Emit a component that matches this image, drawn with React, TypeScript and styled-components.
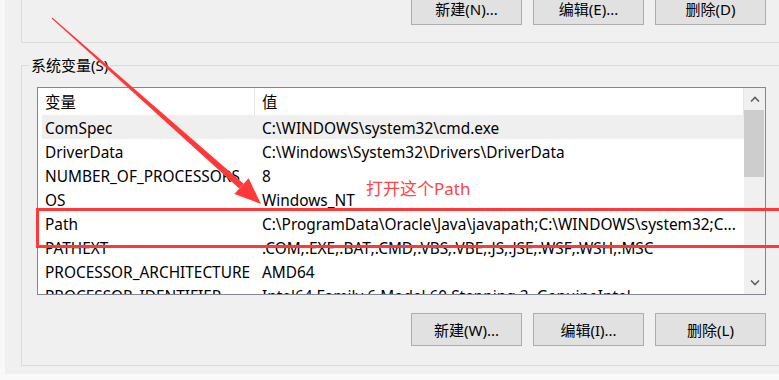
import { createGlobalStyle, styled } from "styled-components";

const GlobalStyle = createGlobalStyle`
    html, body {
        margin: 0;
        padding: 0;
        background: #f9f9f9;
    }
    * {
        box-sizing: border-box;
    }
`;

const FONT = `"Noto Sans", "Noto Sans CJK SC", sans-serif`;

const Screen = styled.div`
    position: relative;
    width: 779px;
    height: 380px;
    display: flex;
    overflow: hidden;
    font-family: ${FONT};
    font-size: 15px;
    color: #000;
`;

const BehindStrip = styled.div`
    width: 5px;
    flex-shrink: 0;
    background: #f9f9f9;
`;

const Dialog = styled.div`
    flex: 1;
    height: 374px;
    background: #f0f0f0;
    padding-left: 16px;
    display: flex;
    flex-direction: column;
    overflow: hidden;
`;

const GroupBox = styled.div<{ $top?: boolean }>`
    width: 780px;
    flex-shrink: 0;
    border: 1px solid #dcdcdc;
    display: flex;
    flex-direction: column;
    margin-top: ${(p) => (p.$top ? "-20px" : "22px")};
    padding: ${(p) => (p.$top ? "11px 0 17px 15px" : "0 0 19px 15px")};
`;

const Legend = styled.div`
    align-self: flex-start;
    margin: -11px 0 0 -8px;
    padding: 0 2px;
    height: 21px;
    line-height: 21px;
    background: #f0f0f0;
`;

const ButtonRow = styled.div`
    width: 729px;
    display: flex;
    justify-content: flex-end;
    gap: 11px;
`;

const Button = styled.button`
    width: 111px;
    height: 33px;
    background: #e1e1e1;
    border: 1px solid #adadad;
    font-family: ${FONT};
    font-size: 15px;
    color: #000;
    padding: 0;
`;

const ListBox = styled.div`
    width: 729px;
    height: 208px;
    margin: 11px 0 18px;
    border: 1px solid #828790;
    background: #fff;
    display: flex;
    overflow: hidden;
    font-size: 15.4px;
`;

const Table = styled.div`
    flex: 1;
    display: flex;
    flex-direction: column;
    overflow: hidden;
`;

const HeaderRow = styled.div`
    display: flex;
    height: 27px;
    flex-shrink: 0;
    border-right: 1px solid #e5e5e5;
`;

const HeaderCell = styled.div<{ $w?: number }>`
    ${(p) => (p.$w ? `width: ${p.$w}px; border-right: 1px solid #e5e5e5;` : "flex: 1;")}
    padding-left: 7px;
    line-height: 29px;
    white-space: nowrap;
    overflow: hidden;
`;

const Row = styled.div<{ $hover?: boolean }>`
    display: flex;
    height: 24px;
    flex-shrink: 0;
    margin-left: 4px;
    background: ${(p) => (p.$hover ? "#efefef" : "transparent")};
`;

const Cell = styled.div<{ $w?: number }>`
    ${(p) => (p.$w ? `width: ${p.$w}px;` : "flex: 1;")}
    padding-left: ${(p) => (p.$w ? "3px" : "7px")};
    height: 24px;
    line-height: 27px;
    white-space: nowrap;
    overflow: hidden;
`;

const ScrollBar = styled.div`
    width: 21px;
    flex-shrink: 0;
    background: #f0f0f0;
    display: flex;
    flex-direction: column;
`;

const ScrollButton = styled.div`
    height: 22px;
    display: flex;
    align-items: center;
    justify-content: center;
`;

const Thumb = styled.div`
    height: 67px;
    margin-right: 1px;
    background: #cdcdcd;
`;

const Track = styled.div`
    flex: 1;
`;

const Overlay = styled.div`
    position: absolute;
    inset: 0;
    pointer-events: none;
`;

const HighlightBox = styled.div`
    position: absolute;
    left: 36px;
    top: 208px;
    width: 780px;
    height: 40px;
    border: 3px solid #ff3838;
`;

const Note = styled.div`
    position: absolute;
    left: 366px;
    top: 175px;
    font-size: 17px;
    color: #f44;
    white-space: nowrap;
`;

const ArrowSvg = styled.svg`
    position: absolute;
    left: 0;
    top: 0;
`;

const Chevron = ({ up }: { up?: boolean }) => (
    <svg width="10" height="6" viewBox="0 0 10 6">
        <polyline
            points={up ? "1,5.5 5,1.5 9,5.5" : "1,0.5 5,4.5 9,0.5"}
            fill="none"
            stroke="#606060"
            strokeWidth="1.6"
        />
    </svg>
);

const rows = [
    ["ComSpec", "C:\\WINDOWS\\system32\\cmd.exe"],
    ["DriverData", "C:\\Windows\\System32\\Drivers\\DriverData"],
    ["NUMBER_OF_PROCESSORS", "8"],
    ["OS", "Windows_NT"],
    ["Path", "C:\\ProgramData\\Oracle\\Java\\javapath;C:\\WINDOWS\\system32;C..."],
    ["PATHEXT", ".COM;.EXE;.BAT;.CMD;.VBS;.VBE;.JS;.JSE;.WSF;.WSH;.MSC"],
    ["PROCESSOR_ARCHITECTURE", "AMD64"],
    ["PROCESSOR_IDENTIFIER", "Intel64 Family 6 Model 60 Stepping 3, GenuineIntel"],
];

export default function App() {
    return <>
        <GlobalStyle />
        <Screen>
            <BehindStrip />
            <Dialog>
                <GroupBox $top>
                    <ButtonRow>
                        <Button>新建(N)...</Button>
                        <Button>编辑(E)...</Button>
                        <Button>删除(D)</Button>
                    </ButtonRow>
                </GroupBox>
                <GroupBox>
                    <Legend>系统变量(S)</Legend>
                    <ListBox>
                        <Table>
                            <HeaderRow>
                                <HeaderCell $w={217}>变量</HeaderCell>
                                <HeaderCell>值</HeaderCell>
                            </HeaderRow>
                            {rows.map(([name, value], i) => (
                                <Row key={name} $hover={i === 0}>
                                    <Cell $w={213}>{name}</Cell>
                                    <Cell>{value}</Cell>
                                </Row>
                            ))}
                        </Table>
                        <ScrollBar>
                            <ScrollButton><Chevron up /></ScrollButton>
                            <Thumb />
                            <Track />
                            <ScrollButton><Chevron /></ScrollButton>
                        </ScrollBar>
                    </ListBox>
                    <ButtonRow>
                        <Button>新建(W)...</Button>
                        <Button>编辑(I)...</Button>
                        <Button>删除(L)</Button>
                    </ButtonRow>
                </GroupBox>
            </Dialog>
            <Overlay>
                <ArrowSvg width="779" height="380" viewBox="0 0 779 380">
                    <polygon
                        points="51.7,18.4 52.3,17.6 243.6,183.8 239.2,188.6"
                        fill="#ff3838"
                    />
                    <polygon
                        points="261,204 234.4,194 248.6,178.3"
                        fill="#ff3838"
                    />
                </ArrowSvg>
                <HighlightBox />
                <Note>打开这个Path</Note>
            </Overlay>
        </Screen>
    </>;
}
